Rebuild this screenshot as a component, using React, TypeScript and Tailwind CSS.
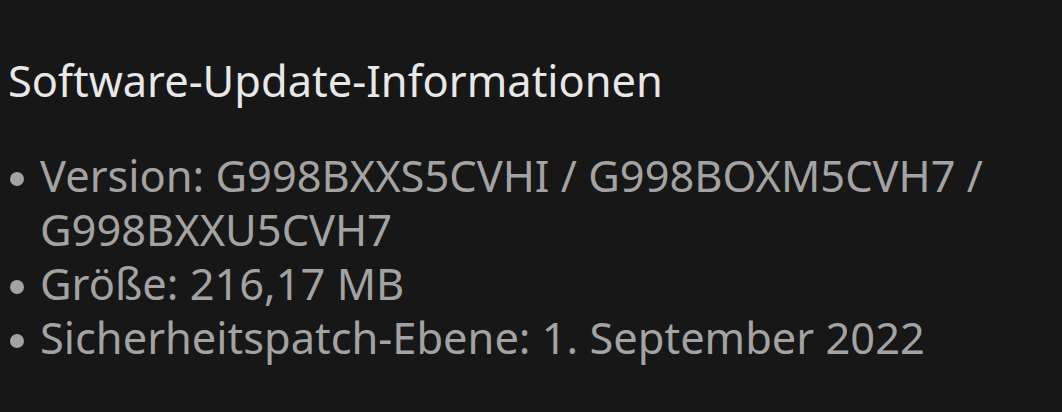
import React from "react";

const items = [
  "Version: G998BXXS5CVHI / G998BOXM5CVH7 / G998BXXU5CVH7",
  "Größe: 216,17 MB",
  "Sicherheitspatch-Ebene: 1. September 2022",
];

export default function App() {
  return (
    <div
      className="h-[412px] w-[1062px] overflow-hidden bg-[#171717] pl-[8px] pt-[54px]"
      style={{ fontFamily: '"Noto Sans", "Open Sans", sans-serif' }}
    >
      <h1 className="text-[43.4px] leading-[54px] font-normal text-[#e8e8e8]">
        Software-Update-Informationen
      </h1>
      <ul className="mt-[41px] w-[1000px]">
        {items.map((text) => (
          <li
            key={text}
            className="flex text-[43.4px] leading-[54px] text-[#a3a3a3]"
          >
            <span className="mt-[23px] mr-[16px] ml-[2px] h-[14px] w-[14px] shrink-0 rounded-full bg-[#a3a3a3]" />
            <span>{text}</span>
          </li>
        ))}
      </ul>
    </div>
  );
}
